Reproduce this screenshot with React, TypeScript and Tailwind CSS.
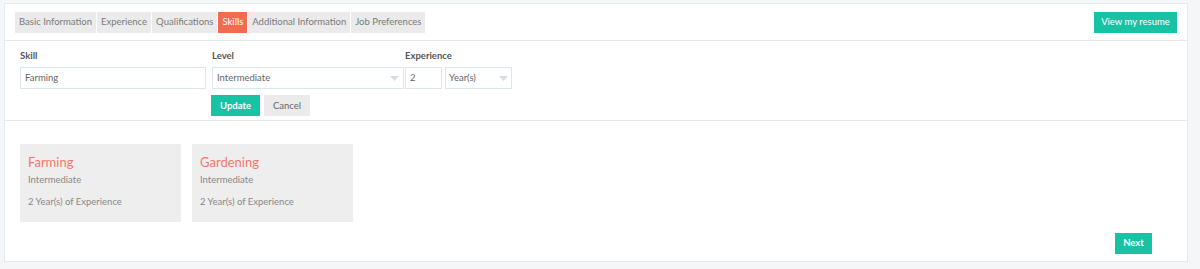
import React from "react";

const tabs = [
  "Basic Information",
  "Experience",
  "Qualifications",
  "Skills",
  "Additional Information",
  "Job Preferences",
];

const skills = [
  { name: "Farming", level: "Intermediate", years: 2 },
  { name: "Gardening", level: "Intermediate", years: 2 },
];

function Caret() {
  return (
    <svg width="9" height="5" viewBox="0 0 9 5" className="shrink-0">
      <path d="M0 0h9L4.5 5z" fill="#d5dde2" />
    </svg>
  );
}

export default function App() {
  return (
    <div
      className="min-h-[269px] w-[1200px] bg-[#f4f6f7] pt-[3px]"
      style={{ fontFamily: "Lato, 'Open Sans', sans-serif" }}
    >
      <div className="ml-[4px] flex h-[259px] w-[1184px] flex-col border border-[#e2eaee] bg-white">
        {/* Tabs */}
        <div className="flex h-[37px] items-start justify-between border-b border-[#e2eaee] pl-[10px] pr-[10px] pt-[8px]">
          <div className="flex gap-[1px]">
            {tabs.map((t) => (
              <div
                key={t}
                className={
                  t === "Skills"
                    ? "flex h-[21px] items-center bg-[#f26b50] px-[4px] text-[9.5px] text-white"
                    : "flex h-[21px] items-center bg-[#ebebeb] px-[4px] text-[9.5px] text-[#7a7a7a]"
                }
              >
                {t}
              </div>
            ))}
          </div>
          <button className="flex h-[21px] w-[83px] items-center justify-center bg-[#17c3a4] text-[9.5px] text-white">
            View my resume
          </button>
        </div>

        {/* Form */}
        <div className="flex h-[80px] flex-col border-b border-[#e2eaee] pl-[15px] pt-[8px]">
          <div className="flex items-end">
            <div className="w-[192px]">
              <div className="mb-[4px] text-[9.5px] font-bold text-[#555]">Skill</div>
              <div className="flex h-[22px] w-[186px] items-center border border-[#dde7eb] px-[4px] text-[9.5px] text-[#666]">
                Farming
              </div>
            </div>
            <div className="w-[193px]">
              <div className="mb-[4px] text-[9.5px] font-bold text-[#555]">Level</div>
              <div className="flex h-[22px] w-[192px] items-center justify-between border border-[#dde7eb] px-[4px] text-[9.5px] text-[#666]">
                Intermediate
                <Caret />
              </div>
            </div>
            <div>
              <div className="mb-[4px] text-[9.5px] font-bold text-[#555]">Experience</div>
              <div className="flex gap-[3px]">
                <div className="flex h-[22px] w-[37px] items-center border border-[#dde7eb] px-[4px] text-[9.5px] text-[#666]">
                  2
                </div>
                <div className="flex h-[22px] w-[67px] items-center justify-between border border-[#dde7eb] px-[3px] text-[9.5px] text-[#666]">
                  Year(s)
                  <Caret />
                </div>
              </div>
            </div>
          </div>
          <div className="ml-[191px] mt-[6px] flex gap-[4px]">
            <button className="flex h-[21px] w-[49px] items-center justify-center bg-[#17c3a4] text-[9.5px] font-bold text-white">
              Update
            </button>
            <button className="flex h-[21px] w-[46px] items-center justify-center bg-[#ebebeb] text-[9.5px] text-[#666]">
              Cancel
            </button>
          </div>
        </div>

        {/* Skill cards */}
        <div className="flex flex-1 flex-col pl-[15px] pr-[35px] pt-[23px]">
          <div className="flex gap-[11px]">
            {skills.map((s) => (
              <div key={s.name} className="h-[78px] w-[161px] bg-[#eeeeee] px-[8px] pt-[9px]">
                <div className="text-[13px] leading-[18px] text-[#f47869]">{s.name}</div>
                <div className="mt-[2px] text-[9.5px] text-[#888]">{s.level}</div>
                <div className="mt-[8px] text-[9.5px] text-[#888]">
                  {s.years} Year(s) of Experience
                </div>
              </div>
            ))}
          </div>
          <div className="mt-[11px] flex justify-end">
            <button className="flex h-[21px] w-[37px] items-center justify-center bg-[#17c3a4] text-[9.5px] font-bold text-white">
              Next
            </button>
          </div>
        </div>
      </div>
    </div>
  );
}
